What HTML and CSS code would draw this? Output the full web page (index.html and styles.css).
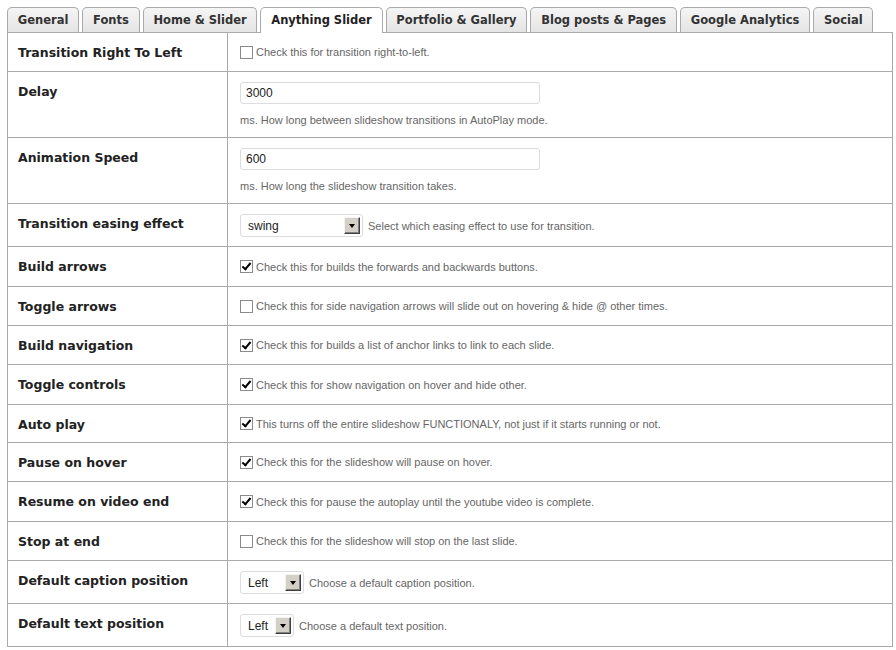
FILE: index.html
```html
<!DOCTYPE html>
<html>
<head>
<meta charset="utf-8">
<title>Anything Slider options</title>
<link rel="stylesheet" href="styles.css">
</head>
<body>
<div class="page">
  <ul class="tabs">
    <li class="tab">General</li>
    <li class="tab">Fonts</li>
    <li class="tab">Home &amp; Slider</li>
    <li class="tab active">Anything Slider</li>
    <li class="tab">Portfolio &amp; Gallery</li>
    <li class="tab">Blog posts &amp; Pages</li>
    <li class="tab">Google Analytics</li>
    <li class="tab">Social</li>
  </ul>
  <table class="options">
    <tr>
      <th>Transition Right To Left</th>
      <td><div class="line"><span class="check"></span><span class="desc">Check this for transition right-to-left.</span></div></td>
    </tr>
    <tr>
      <th>Delay</th>
      <td><div class="input">3000</div><div class="desc below">ms. How long between slideshow transitions in AutoPlay mode.</div></td>
    </tr>
    <tr>
      <th>Animation Speed</th>
      <td><div class="input">600</div><div class="desc below">ms. How long the slideshow transition takes.</div></td>
    </tr>
    <tr>
      <th>Transition easing effect</th>
      <td><div class="line tall"><span class="select w-swing"><span class="val">swing</span><span class="btn"><i></i></span></span><span class="desc">Select which easing effect to use for transition.</span></div></td>
    </tr>
    <tr>
      <th>Build arrows</th>
      <td><div class="line plus"><span class="check on"></span><span class="desc">Check this for builds the forwards and backwards buttons.</span></div></td>
    </tr>
    <tr>
      <th>Toggle arrows</th>
      <td><div class="line"><span class="check"></span><span class="desc">Check this for side navigation arrows will slide out on hovering &amp; hide @ other times.</span></div></td>
    </tr>
    <tr>
      <th>Build navigation</th>
      <td><div class="line"><span class="check on"></span><span class="desc">Check this for builds a list of anchor links to link to each slide.</span></div></td>
    </tr>
    <tr>
      <th>Toggle controls</th>
      <td><div class="line plus"><span class="check on"></span><span class="desc">Check this for show navigation on hover and hide other.</span></div></td>
    </tr>
    <tr>
      <th>Auto play</th>
      <td><div class="line minus"><span class="check on"></span><span class="desc">This turns off the entire slideshow FUNCTIONALY, not just if it starts running or not.</span></div></td>
    </tr>
    <tr>
      <th>Pause on hover</th>
      <td><div class="line"><span class="check on"></span><span class="desc">Check this for the slideshow will pause on hover.</span></div></td>
    </tr>
    <tr>
      <th>Resume on video end</th>
      <td><div class="line plus"><span class="check on"></span><span class="desc">Check this for pause the autoplay until the youtube video is complete.</span></div></td>
    </tr>
    <tr>
      <th>Stop at end</th>
      <td><div class="line"><span class="check"></span><span class="desc">Check this for the slideshow will stop on the last slide.</span></div></td>
    </tr>
    <tr>
      <th>Default caption position</th>
      <td><div class="line tall"><span class="select w-cap"><span class="val">Left</span><span class="btn"><i></i></span></span><span class="desc">Choose a default caption position.</span></div></td>
    </tr>
    <tr>
      <th>Default text position</th>
      <td><div class="line tall"><span class="select w-text"><span class="val">Left</span><span class="btn"><i></i></span></span><span class="desc">Choose a default text position.</span></div></td>
    </tr>
  </table>
</div>
</body>
</html>
```

FILE: styles.css
```css
html, body {
  margin: 0;
  padding: 0;
  background: #fff;
}
.page {
  padding: 7px 0 0 7px;
  width: 886px;
}
.tabs {
  list-style: none;
  margin: 0;
  padding: 0;
  display: flex;
  gap: 3px;
  position: relative;
  z-index: 1;
}
.tab {
  height: 24px;
  line-height: 25px;
  padding: 0 9.8px;
  border: 1px solid #aaa;
  border-bottom: none;
  border-radius: 5px 5px 0 0;
  background: linear-gradient(#f5f5f5, #e4e4e4);
  font-family: "DejaVu Sans", Verdana, sans-serif;
  font-weight: bold;
  font-size: 11.5px;
  color: #333;
  white-space: nowrap;
}
.tab.active {
  background: #fff;
  height: 25px;
  margin-bottom: -1px;
  color: #222;
}
.options {
  border-collapse: collapse;
  width: 886px;
  border: 1px solid #aaa;
}
.options th,
.options td {
  border: 1px solid #aaa;
  vertical-align: top;
  text-align: left;
}
.options th {
  width: 199px;
  padding: 11px 10px 8px 10px;
  font-family: "DejaVu Sans", Verdana, sans-serif;
  font-weight: bold;
  font-size: 12.5px;
  line-height: 18px;
  color: #222;
}
.options td {
  padding: 10px 11px 10px 12px;
  line-height: 18px;
}
.line {
  display: flex;
  align-items: center;
  height: 18px;
}
.line.plus {
  height: 19px;
}
.line.minus {
  height: 17px;
}
.line.tall {
  height: 23px;
  margin-bottom: -1px;
}
.desc {
  font-family: "Liberation Sans", Arial, sans-serif;
  font-size: 11px;
  color: #666;
  white-space: nowrap;
}
.desc.below {
  display: block;
  margin-top: 9px;
  line-height: 14px;
}
.check {
  flex: none;
  box-sizing: border-box;
  width: 13px;
  height: 13px;
  border: 1px solid #8a8a8a;
  background: #fff;
  margin: 0 3px 0 0;
  position: relative;
}
.check.on::after {
  content: "";
  position: absolute;
  left: 3px;
  top: 0px;
  width: 3px;
  height: 7px;
  border: solid #000;
  border-width: 0 2px 2px 0;
  transform: rotate(40deg);
}
.input {
  box-sizing: border-box;
  width: 300px;
  height: 22px;
  border: 1px solid #dcdcdc;
  border-radius: 3px;
  padding: 0 5px;
  font-family: "Liberation Sans", Arial, sans-serif;
  font-size: 12px;
  line-height: 20px;
  color: #222;
}
.select {
  flex: none;
  display: flex;
  align-items: center;
  justify-content: space-between;
  box-sizing: border-box;
  height: 23px;
  border: 1px solid #dcdcdc;
  border-radius: 3px;
  padding: 0 2px 0 7px;
  margin-right: 5px;
  font-family: "Liberation Sans", Arial, sans-serif;
  font-size: 12px;
  color: #222;
}
.w-swing { width: 123px; }
.w-cap { width: 64px; }
.w-text { width: 54px; }
.select .btn {
  box-sizing: border-box;
  width: 16px;
  height: 17px;
  background: #d4d0c8;
  border: 1px solid;
  border-color: #f4f3ee #404040 #404040 #f4f3ee;
  box-shadow: inset -1px -1px 0 #808080;
  position: relative;
}
.select .btn i {
  position: absolute;
  left: 4px;
  top: 6px;
  width: 0;
  height: 0;
  border-left: 3.5px solid transparent;
  border-right: 3.5px solid transparent;
  border-top: 4px solid #000;
}
```
